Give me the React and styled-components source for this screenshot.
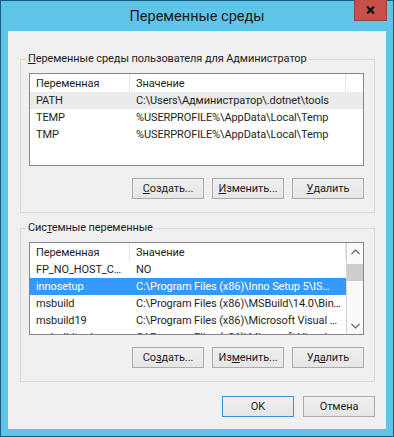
import React from "react";
import styled, { createGlobalStyle } from "styled-components";

const GlobalStyle = createGlobalStyle`
  html, body {
    margin: 0;
    padding: 0;
    background: #1b5874;
  }
  body {
    font-family: Roboto, "Noto Sans", sans-serif;
    font-size: 11px;
    letter-spacing: -0.1px;
    color: #1e1e1e;
  }
  * {
    box-sizing: border-box;
  }
`;

const userVars = [
  { name: "PATH", value: "C:\\Users\\Администратор\\.dotnet\\tools", hot: true },
  { name: "TEMP", value: "%USERPROFILE%\\AppData\\Local\\Temp" },
  { name: "TMP", value: "%USERPROFILE%\\AppData\\Local\\Temp" },
];

const systemVars = [
  { name: "FP_NO_HOST_C…", value: "NO" },
  { name: "innosetup", value: "C:\\Program Files (x86)\\Inno Setup 5\\IS…", selected: true },
  { name: "msbuild", value: "C:\\Program Files (x86)\\MSBuild\\14.0\\Bin…" },
  { name: "msbuild19", value: "C:\\Program Files (x86)\\Microsoft Visual …" },
  { name: "msbuildtools", value: "C:\\Program Files (x86)\\Microsoft Visual …" },
];

// label with one underlined access key
const Label = ({ text, at }) => (
  <>
    {text.slice(0, at)}
    <Key>{text[at]}</Key>
    {text.slice(at + 1)}
  </>
);

const VarList = ({ rows, scroll }) => (
  <List>
    <ListBody>
      <HeaderRow>
        <HeaderCell w={100}>Переменная</HeaderCell>
        <HeaderCell w={216}>Значение</HeaderCell>
      </HeaderRow>
      {rows.map((r) => (
        <Row key={r.name} hot={r.hot} selected={r.selected}>
          <Cell w={100}>{r.name}</Cell>
          <Cell w={216}>{r.value}</Cell>
        </Row>
      ))}
    </ListBody>
    {scroll && (
      <ScrollBar>
        <ArrowButton>
          <svg width="9" height="6" viewBox="0 0 9 6">
            <path d="M0.5 5 L4.5 1 L8.5 5" fill="none" stroke="#606060" strokeWidth="1.1" />
          </svg>
        </ArrowButton>
        <Track>
          <Thumb />
        </Track>
        <ArrowButton>
          <svg width="9" height="6" viewBox="0 0 9 6">
            <path d="M0.5 1 L4.5 5 L8.5 1" fill="none" stroke="#606060" strokeWidth="1.1" />
          </svg>
        </ArrowButton>
      </ScrollBar>
    )}
  </List>
);

export default function App() {
  return (
    <>
      <GlobalStyle />
      <Window>
        <TitleBar>
          <Title>Переменные среды</Title>
          <CloseButton>
            <svg width="9" height="8" viewBox="0 0 9 8">
              <path d="M1 0.5 L8 7.5 M8 0.5 L1 7.5" stroke="#111" strokeWidth="2.2" />
            </svg>
          </CloseButton>
        </TitleBar>

        <Client>
          <Group>
            <Legend>
              <Label text="Переменные среды пользователя для Администратор" at={0} />
            </Legend>
            <VarList rows={userVars} />
            <Buttons>
              <Button><Label text="Создать..." at={0} /></Button>
              <Button><Label text="Изменить..." at={0} /></Button>
              <Button><Label text="Удалить" at={0} /></Button>
            </Buttons>
          </Group>

          <Group>
            <Legend>
              <Label text="Системные переменные" at={3} />
            </Legend>
            <VarList rows={systemVars} scroll />
            <Buttons>
              <Button><Label text="Создать..." at={2} /></Button>
              <Button><Label text="Изменить..." at={2} /></Button>
              <Button><Label text="Удалить" at={2} /></Button>
            </Buttons>
          </Group>

          <DialogButtons>
            <Button primary>OK</Button>
            <Button>Отмена</Button>
          </DialogButtons>
        </Client>
      </Window>
    </>
  );
}

const Window = styled.div`
  width: 394px;
  height: 437px;
  border: 1px solid #1d5a78;
  background: #5ec4e8;
  display: flex;
  flex-direction: column;
`;

const TitleBar = styled.div`
  height: 30px;
  display: grid;
  grid-template-columns: 1fr auto 1fr;
  align-items: start;
`;

const Title = styled.div`
  grid-column: 2;
  font-size: 14.5px;
  letter-spacing: 0;
  line-height: 31px;
  color: #1a1a1a;
`;

const CloseButton = styled.div`
  grid-column: 3;
  justify-self: end;
  margin-right: 6px;
  margin-top: -1px;
  width: 33px;
  height: 21px;
  background: #c7504b;
  border: 1px solid #94443f;
  border-top: none;
  display: flex;
  align-items: center;
  justify-content: center;
`;

const Client = styled.div`
  flex: 1;
  margin: 0 7px 7px;
  background: #f0f0f0;
  padding: 20px 11px 12px 12px;
  display: flex;
  flex-direction: column;
`;

const Group = styled.fieldset`
  margin: 0 0 7px;
  padding: 6px 10px 13px 8px;
  border: 1px solid #d9d9d9;
  min-width: 0;
`;

const Legend = styled.legend`
  margin-left: -3px;
  padding: 0 2px;
  line-height: 16px;
  white-space: nowrap;
`;

const Key = styled.span`
  text-decoration: underline;
`;

const List = styled.div`
  height: 93px;
  border: 1px solid #828790;
  background: #fff;
  display: flex;
  overflow: hidden;
`;

const ListBody = styled.div`
  flex: 1;
  min-width: 0;
  overflow: hidden;
`;

const HeaderRow = styled.div`
  display: flex;
  height: 18px;
`;

const HeaderCell = styled.div`
  width: ${(p) => p.w}px;
  flex: none;
  padding-left: 6px;
  line-height: 19px;
  border-right: 1px solid #e5e5e5;
  color: #1e1e1e;
  white-space: nowrap;
  overflow: hidden;
`;

const Row = styled.div`
  display: flex;
  height: 17px;
  line-height: 17px;
  background: ${(p) => (p.selected ? "#3399ff" : p.hot ? "#ebebeb" : "transparent")};
  color: ${(p) => (p.selected ? "#fff" : "#1e1e1e")};
`;

const Cell = styled.div`
  width: ${(p) => p.w}px;
  flex: none;
  padding-left: 6px;
  white-space: nowrap;
  overflow: hidden;
`;

const ScrollBar = styled.div`
  width: 17px;
  flex: none;
  display: flex;
  flex-direction: column;
  border-left: 1px solid #d4d4d4;
  background: #fafafa;
`;

const ArrowButton = styled.div`
  height: 17px;
  display: flex;
  align-items: center;
  justify-content: center;
`;

const Track = styled.div`
  flex: 1;
  padding-top: 4px;
`;

const Thumb = styled.div`
  height: 17px;
  background: #cdcdcd;
`;

const Buttons = styled.div`
  display: flex;
  justify-content: flex-end;
  gap: 8px;
  margin-top: 12px;
`;

const DialogButtons = styled(Buttons)`
  gap: 9px;
  margin-top: 7px;
`;

const Button = styled.div`
  width: 72px;
  height: 21px;
  border: 1px solid ${(p) => (p.primary ? "#3c8fd8" : "#acacac")};
  background: linear-gradient(#f0f0f0, #e5e5e5);
  display: flex;
  align-items: center;
  justify-content: center;
  color: #1e1e1e;
  white-space: nowrap;
`;
